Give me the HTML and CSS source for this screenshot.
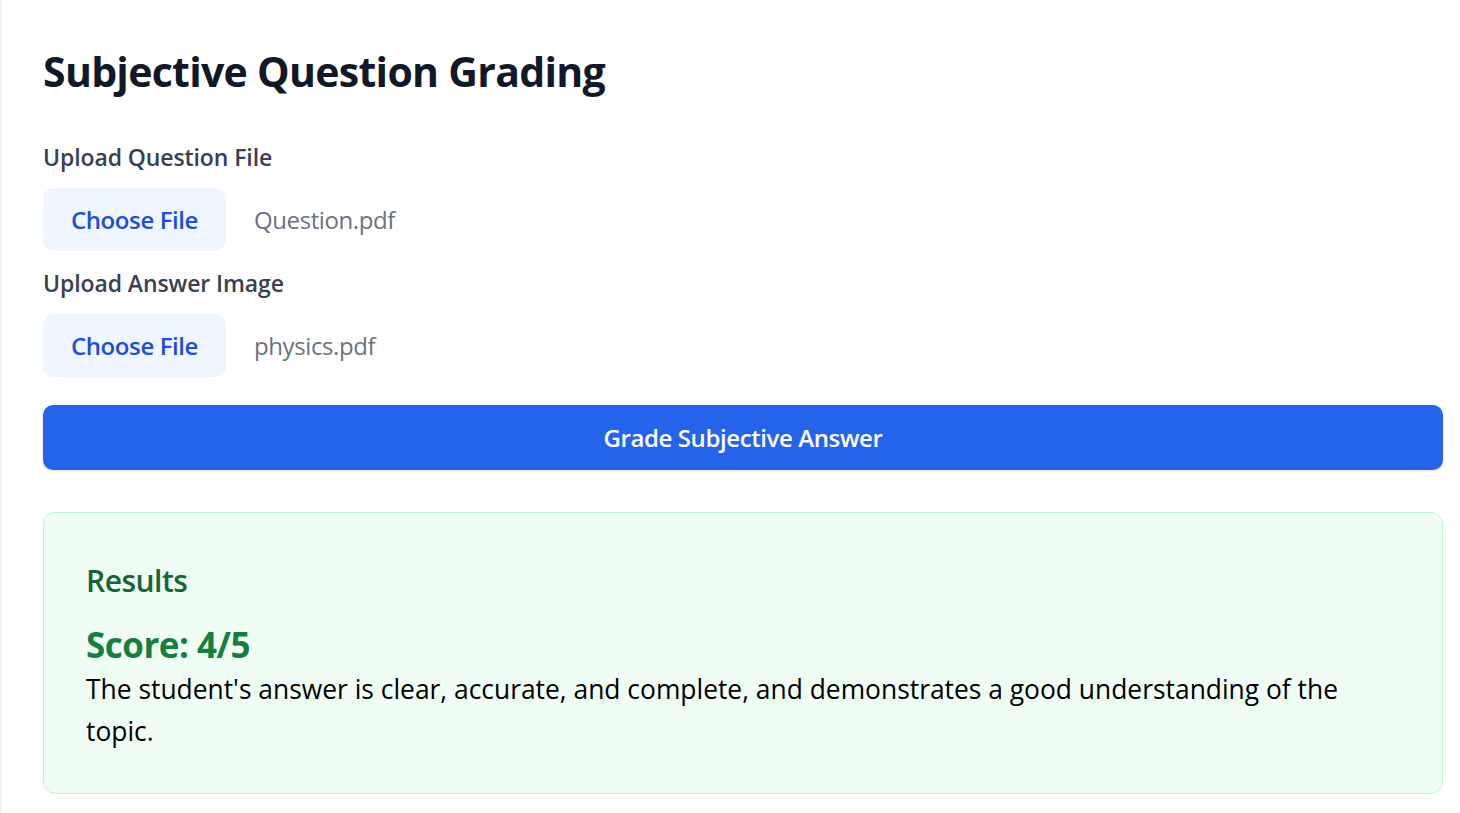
FILE: index.html
```html
<!DOCTYPE html>
<html lang="en">
<head>
<meta charset="utf-8">
<title>Subjective Question Grading</title>
<link rel="stylesheet" href="styles.css">
</head>
<body>
<main class="page">
  <h1 class="title">Subjective Question Grading</h1>

  <div class="field">
    <label class="field-label">Upload Question File</label>
    <div class="file-row">
      <span class="file-btn">Choose File</span>
      <span class="file-name">Question.pdf</span>
    </div>
  </div>

  <div class="field">
    <label class="field-label">Upload Answer Image</label>
    <div class="file-row">
      <span class="file-btn">Choose File</span>
      <span class="file-name">physics.pdf</span>
    </div>
  </div>

  <button class="grade-btn" type="button">Grade Subjective Answer</button>

  <section class="results">
    <h2 class="results-title">Results</h2>
    <h3 class="score">Score: 4/5</h3>
    <p class="feedback">The student's answer is clear, accurate, and complete, and demonstrates a good understanding of the topic.</p>
  </section>
</main>
</body>
</html>
```

FILE: styles.css
```css
html, body {
  margin: 0;
  padding: 0;
  background: #ffffff;
}

body {
  font-family: "Open Sans", "Noto Sans", sans-serif;
  color: #111827;
}

.page {
  border-left: 2px solid #f3f4f6;
  padding: 44px 17px 0 41px;
  min-height: 813px;
  box-sizing: border-box;
}

.title {
  margin: 0;
  font-size: 41px;
  line-height: 54px;
  font-weight: 700;
  color: #111827;
  letter-spacing: -0.7px;
}

.field {
  display: flex;
  flex-direction: column;
  gap: 16px;
}

.title + .field {
  margin-top: 44px;
}

.field + .field {
  margin-top: 17px;
}

.field-label {
  font-size: 23px;
  line-height: 30px;
  font-weight: 600;
  color: #374151;
  letter-spacing: -0.1px;
}

.file-row {
  display: flex;
  align-items: center;
  gap: 28px;
}

.file-btn {
  display: flex;
  align-items: center;
  justify-content: center;
  width: 183px;
  height: 63px;
  box-sizing: border-box;
  background: #eff6ff;
  color: #1d4ed8;
  border-radius: 10px;
  font-size: 24px;
  font-weight: 600;
  letter-spacing: -0.4px;
}

.file-name {
  font-size: 24px;
  color: #6b7280;
  letter-spacing: -0.4px;
}

.grade-btn {
  display: block;
  width: 100%;
  height: 65px;
  margin-top: 28px;
  border: none;
  border-radius: 10px;
  background: #2563eb;
  color: #ffffff;
  font-family: inherit;
  font-size: 24px;
  font-weight: 600;
  letter-spacing: -0.4px;
  box-shadow: 0 1px 3px rgba(0, 0, 0, 0.12);
}

.results {
  margin-top: 42px;
  background: #f0fdf4;
  border: 1px solid #bbf7d0;
  border-radius: 12px;
  padding: 48px 42px 41px 42px;
}

.results-title {
  margin: 0;
  font-size: 30px;
  line-height: 40px;
  font-weight: 600;
  color: #166534;
  letter-spacing: -0.5px;
}

.score {
  margin: 22px 0 0 0;
  font-size: 35px;
  line-height: 44px;
  font-weight: 700;
  color: #15803d;
  letter-spacing: -0.5px;
}

.feedback {
  margin: 1px 0 0 0;
  font-size: 26.4px;
  line-height: 42px;
  color: #000000;
}
```
